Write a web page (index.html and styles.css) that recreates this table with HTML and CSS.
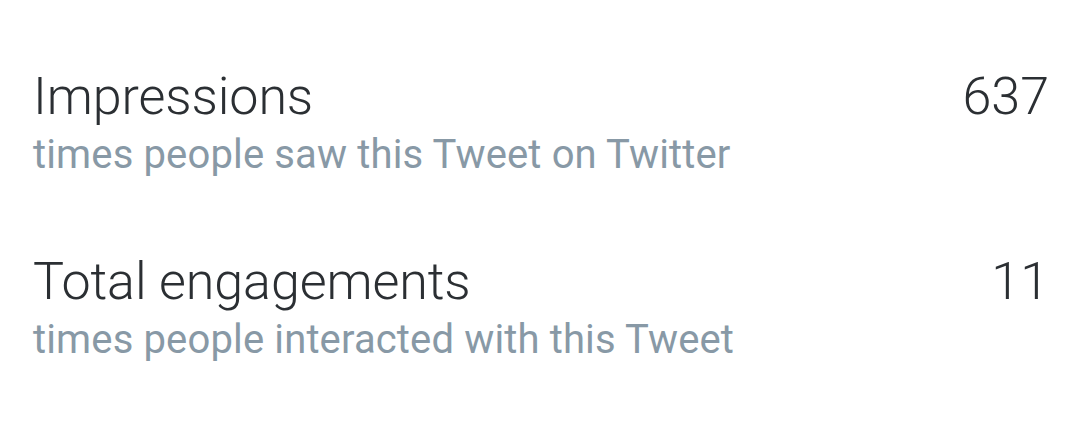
FILE: index.html
```html
<!DOCTYPE html>
<html lang="en">
<head>
    <meta charset="UTF-8">
    <meta name="viewport" content="width=device-width, initial-scale=1.0">
    <title>Tweet activity</title>
    <link rel="stylesheet" href="styles.css">
</head>
<body>
    <div class="stats">
        <div class="stat">
            <div class="stat-text">
                <div class="stat-title">Impressions</div>
                <div class="stat-desc">times people saw this Tweet on Twitter</div>
            </div>
            <div class="stat-value">637</div>
        </div>
        <div class="stat">
            <div class="stat-text">
                <div class="stat-title">Total engagements</div>
                <div class="stat-desc">times people interacted with this Tweet</div>
            </div>
            <div class="stat-value">11</div>
        </div>
    </div>
</body>
</html>
```

FILE: styles.css
```css
body {
    margin: 0;
    font-family: Roboto, "Noto Sans", sans-serif;
    background-color: #fff;
}
.stats {
    padding: 67px 21px 0 33px;
}
.stat {
    display: flex;
    justify-content: space-between;
    align-items: flex-start;
    margin-bottom: 73px;
}
.stat-title {
    font-size: 52px;
    font-weight: 300;
    color: #2b2f33;
    line-height: 60px;
    letter-spacing: -0.1px;
}
.stat-desc {
    font-size: 40px;
    color: #8899a6;
    line-height: 48px;
    letter-spacing: 0.14px;
    margin-top: 4px;
}
.stat-value {
    font-size: 52px;
    font-weight: 300;
    color: #2b2f33;
    line-height: 60px;
}
```
